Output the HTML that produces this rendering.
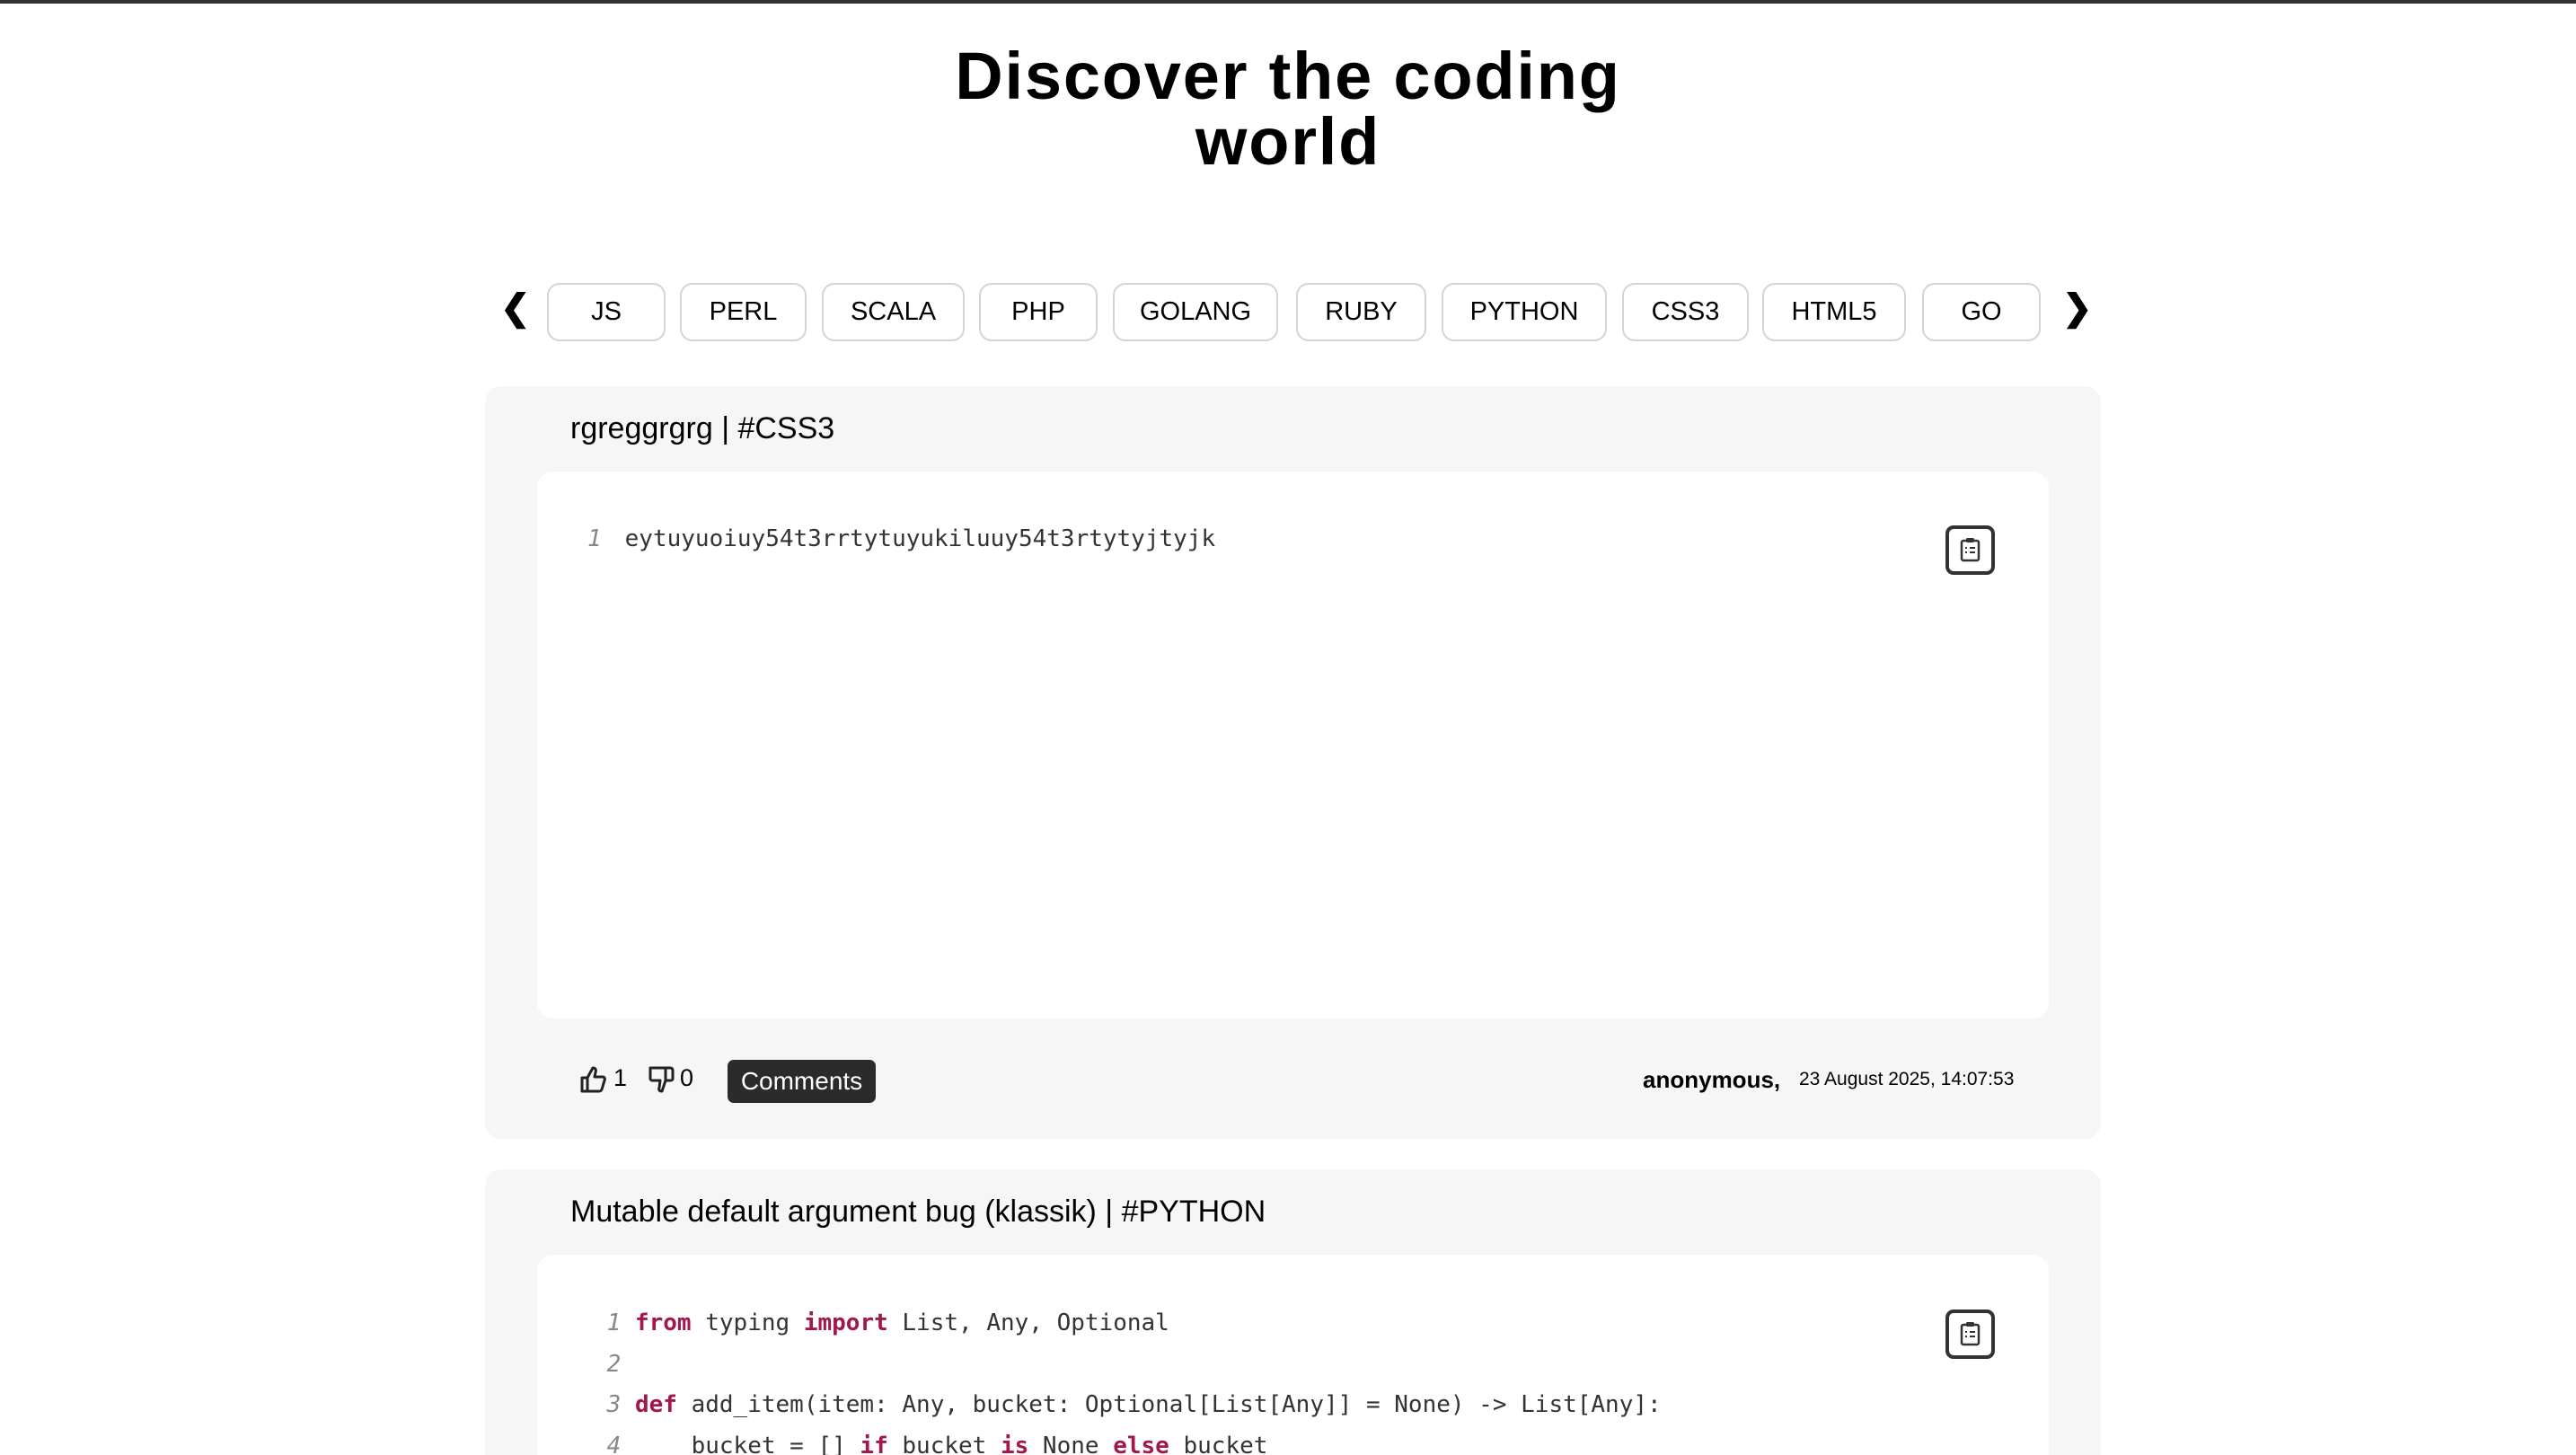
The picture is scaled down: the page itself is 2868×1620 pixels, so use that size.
<!DOCTYPE html>
<html style="width:2868px;height:1620px;overflow:hidden"><head><meta charset="utf-8"><style>
*{margin:0;padding:0;box-sizing:border-box}
body{width:2868px;height:1620px;overflow:hidden;background:#fff;font-family:"Liberation Sans",sans-serif;color:#000;position:relative}
.abs{position:absolute}
h1{position:absolute;left:0;width:2868px;top:48px;text-align:center;font-size:74px;line-height:73px;font-weight:bold;letter-spacing:1.8px}
.tab{position:absolute;top:315px;height:65px;border:2px solid #d4d4d4;border-radius:14px;font-size:29px;display:flex;align-items:center;justify-content:center;background:#fff}
.chev{position:absolute;top:320px;font-size:40px;font-weight:bold}
.card{position:absolute;left:540px;width:1799px;background:#f6f6f6;border-radius:18px}
.ctitle{position:absolute;left:95px;font-size:34px}
.code{position:absolute;left:58px;width:1683px;background:#fff;border-radius:18px}
.ln{position:absolute;font-family:"DejaVu Sans Mono","Liberation Mono",monospace;font-size:26px;color:#333;white-space:pre}
.num{color:#888;font-style:italic}
.k{color:#a3174f;font-weight:bold}
.copy{position:absolute;width:55px;height:55px;border:4px solid #333;border-radius:9px}
</style></head><body>
<div class="abs" style="left:0;top:0;width:2868px;height:4px;background:#333"></div>
<h1>Discover the coding<br>world</h1>
<div class="chev" style="left:557px">❮</div>
<div class="tab" style="left:609px;width:132px">JS</div>
<div class="tab" style="left:757px;width:141px">PERL</div>
<div class="tab" style="left:915px;width:159px">SCALA</div>
<div class="tab" style="left:1090px;width:132px">PHP</div>
<div class="tab" style="left:1239px;width:184px">GOLANG</div>
<div class="tab" style="left:1443px;width:145px">RUBY</div>
<div class="tab" style="left:1605px;width:184px">PYTHON</div>
<div class="tab" style="left:1806px;width:141px">CSS3</div>
<div class="tab" style="left:1962px;width:160px">HTML5</div>
<div class="tab" style="left:2140px;width:132px">GO</div>
<div class="chev" style="left:2296px">❯</div>

<div class="card" style="top:430px;height:838px">
  <div class="ctitle" style="top:28px">rgreggrgrg | #CSS3</div>
  <div class="code" style="top:95px;height:609px">
    <div class="ln" style="left:56px;top:60px"><span class="num">1</span><span style="padding-left:26px">eytuyuoiuy54t3rrtytuyukiluuy54t3rtytyjtyjk</span></div>
    <div class="copy" style="left:1568px;top:60px"><svg width="47" height="47" viewBox="0 0 47 47"><rect x="14" y="13" width="19" height="22" rx="2" fill="none" stroke="#333" stroke-width="2.5"/><rect x="19" y="10" width="9" height="5" rx="1.5" fill="#333"/><path d="M18 21h2M23 21h6M18 26h2M23 26h6" stroke="#333" stroke-width="2"/></svg></div>
  </div>
  <svg class="abs" style="left:105px;top:756px" width="32" height="32" viewBox="0 0 32 32"><path d="M3 14h6v15H3zM9 14l6-11c3 0 4 2 3 5l-1 5h9c2 0 3 2 2 4l-3 10c-1 2-2 2-3 2H9" fill="none" stroke="#222" stroke-width="3" stroke-linejoin="round"/></svg>
  <div class="abs" style="left:143px;top:755px;font-size:27px">1</div>
  <svg class="abs" style="left:181px;top:756px" width="32" height="32" viewBox="0 0 32 32"><path d="M3 3h22c2 0 3 1 3 3v9c0 1-1 2-2 2h-6l-4 12c-3 0-4-2-3-4l1-8H5c-1 0-2-1-2-2z" fill="none" stroke="#222" stroke-width="3" stroke-linejoin="round"/><path d="M20 3v14" stroke="#222" stroke-width="3"/></svg>
  <div class="abs" style="left:217px;top:755px;font-size:27px">0</div>
  <div class="abs" style="left:270px;top:750px;width:165px;height:48px;background:#2b2b2b;color:#fff;border-radius:7px;font-size:28px;display:flex;align-items:center;justify-content:center">Comments</div>
  <div class="abs" style="left:1289px;top:757px;font-size:26px;font-weight:bold">anonymous,</div>
  <div class="abs" style="left:1463px;top:760px;font-size:21px">23 August 2025, 14:07:53</div>
</div>

<div class="card" style="top:1302px;height:340px">
  <div class="ctitle" style="top:28px">Mutable default argument bug (klassik) | #PYTHON</div>
  <div class="code" style="top:95px;height:300px">
    <div class="ln" style="left:62px;top:54px;line-height:45.7px"><span class="num"> 1</span> <span class="k">from</span> typing <span class="k">import</span> List, Any, Optional
<span class="num"> 2</span>
<span class="num"> 3</span> <span class="k">def</span> add_item(item: Any, bucket: Optional[List[Any]] = None) -&gt; List[Any]:
<span class="num"> 4</span>     bucket = [] <span class="k">if</span> bucket <span class="k">is</span> None <span class="k">else</span> bucket</div>
    <div class="copy" style="left:1568px;top:61px"><svg width="47" height="47" viewBox="0 0 47 47"><rect x="14" y="13" width="19" height="22" rx="2" fill="none" stroke="#333" stroke-width="2.5"/><rect x="19" y="10" width="9" height="5" rx="1.5" fill="#333"/><path d="M18 21h2M23 21h6M18 26h2M23 26h6" stroke="#333" stroke-width="2"/></svg></div>
  </div>
</div>
</body></html>
